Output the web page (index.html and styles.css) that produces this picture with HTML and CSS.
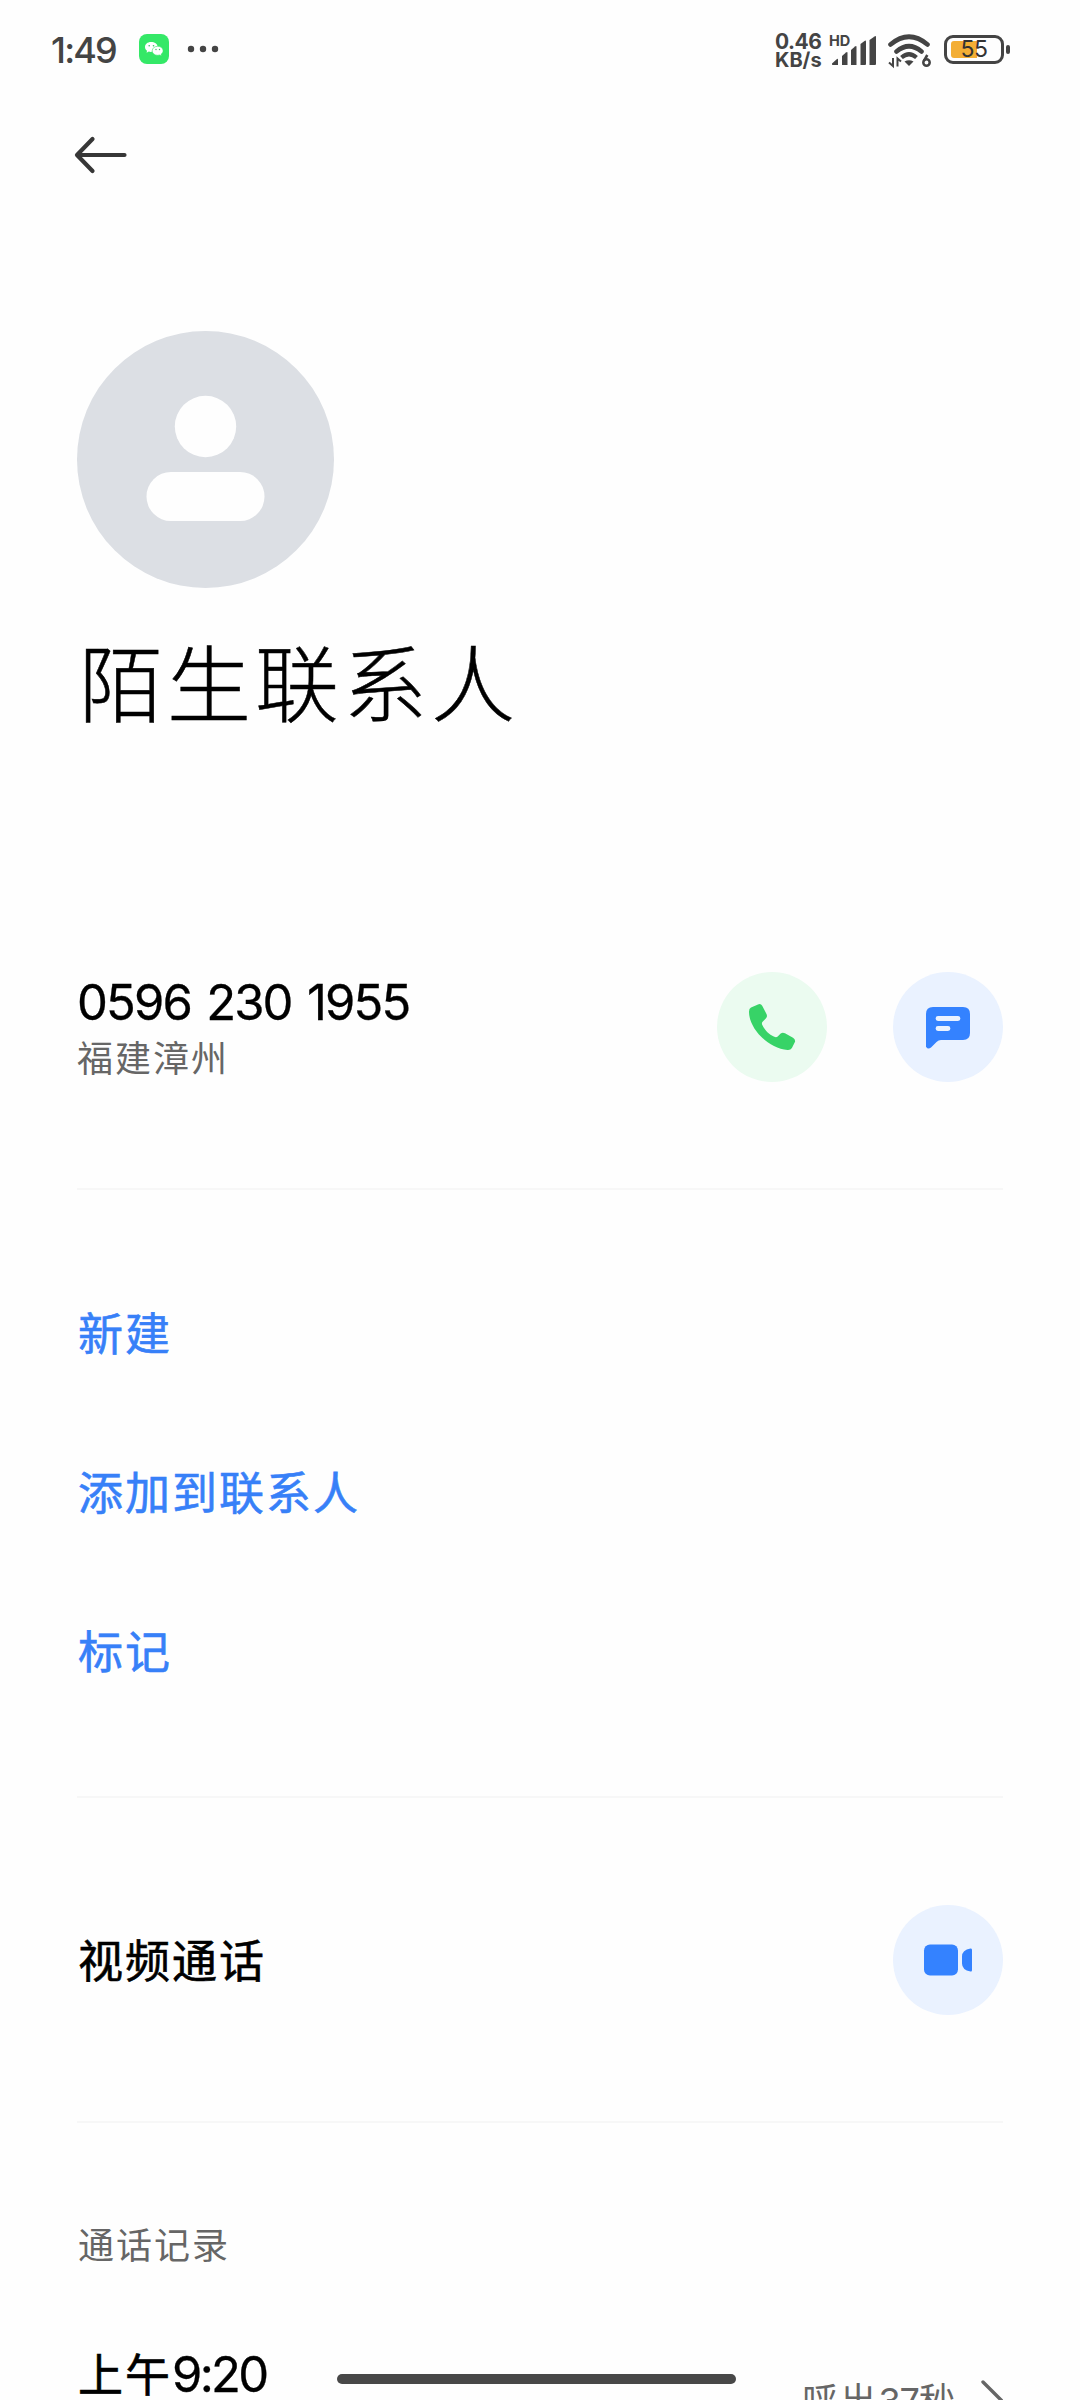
FILE: index.html
```html
<!DOCTYPE html>
<html lang="zh-CN">
<head>
<meta charset="utf-8">
<title>陌生联系人</title>
<link rel="stylesheet" href="styles.css">
</head>
<body>
<div class="screen">
  <header class="status">
    <span class="clock">1:49</span>
    <svg class="wechat" width="30" height="30" viewBox="0 0 30 30">
      <rect width="30" height="30" rx="8" fill="#34e867"/>
      <path d="M12 8c-3.6 0-6 2.2-6 5 0 1.600.8 2.900 2 3.800l-.4 1.900 2.200-1.100c1 .3 2 .4 3.200.2 4 0 5.600-2.600 5.600-5C18.600 10 15.600 8 12 8z" fill="#fff"/>
      <path d="M18.700 12.300c-3.200 0-5.500 2-5.500 4.500s2.300 4.500 5.500 4.500c.7 0 1.300-.1 1.900-.3l1.900 1-.4-1.700c1.200-.8 2-2 2-3.500 0-2.500-2.300-4.500-5.400-4.500z" fill="#fff" stroke="#34e867" stroke-width=".6"/>
      <g fill="#34c060"><circle cx="10.200" cy="11.700" r=".8"/><circle cx="14.500" cy="11.700" r=".8"/><circle cx="17" cy="15.500" r=".7"/><circle cx="20.500" cy="15.500" r=".7"/></g>
    </svg>
    <svg class="dots" width="32" height="8" viewBox="0 0 32 8" fill="#444"><circle cx="4" cy="4" r="3.200"/><circle cx="16" cy="4" r="3.200"/><circle cx="28" cy="4" r="3.200"/></svg>
    <div class="speed"><span>0.46</span><span class="unit">KB/s</span></div>
    <div class="signal">
      <span class="hd">HD</span>
      <svg width="46" height="30" viewBox="0 0 46 30" fill="#444">
        <path d="M1 27.500 6 23q1-.5 1 .5V29H2q-1.500 0-1-1.500z"/>
        <path d="M11 20l4-3.500q1.500-1 1.500.5V29H11z"/><path d="M20 14l4-3.500q1.500-1 1.500.5V29H20z"/>
        <path d="M29.500 8l4-3q1.500-1 1.500.5V28q0 1-1 1h-4.500z"/><path d="M38.500 4l5-3.500q1.500-1 1.500.5V28q0 1-1 1h-5.500z"/>
      </svg>
    </div>
    <svg class="wifi" width="46" height="36" viewBox="0 0 46 36" fill="none" stroke="#444">
      <path d="M3.500 11.500Q22 -4 40.500 11.500M9.500 18.500Q22 8 34.500 18.500" stroke-width="4.600" stroke-linecap="round"/>
      <path d="M14.500 24.500Q22 18 29.500 24.500" stroke-width="4.200"/>
      <path d="M17.500 28.500Q22 26 26.500 28.500L22 33z" fill="#444" stroke="none"/>
      <path d="M6 25v8L2 29.500M10.500 33.500V25.500l3.500 3" stroke-width="2"/>
      <circle cx="39.500" cy="29.500" r="3.200" stroke-width="2.500"/><path d="M36.900 27.800 40.300 22" stroke-width="2.600"/>
    </svg>
    <div class="battery"><div class="cell"><span class="level">55</span></div><i class="cap"></i></div>
  </header>

  <nav class="toolbar">
    <svg width="54" height="38" viewBox="0 0 54 38" fill="none" stroke="#373737" stroke-width="4.200" stroke-linecap="round" stroke-linejoin="round"><path d="M19.500 3 4 19 19.500 35M4.500 19H51.500"/></svg>
  </nav>

  <main>
    <section class="profile">
      <svg width="257" height="257" viewBox="0 0 257 257"><circle cx="128.500" cy="128.500" r="128.500" fill="#dcdfe4"/><circle cx="128.500" cy="95.500" r="30.700" fill="#fefefe"/><rect x="69.500" y="141" width="118" height="49" rx="24.500" fill="#fefefe"/></svg>
      <h1>陌生联系人</h1>
    </section>

    <section class="number">
      <div class="info"><div class="digits">0596 230 1955</div><div class="place">福建漳州</div></div>
      <a class="round green"><svg width="110" height="110" viewBox="0 0 110 110"><path d="M34 35.500 41 32.400q2.800-1 4.200 1.300L49.500 42q1.200 2.600-.7 4.600l-3.200 3.200q-1.200 1.300-.3 3.200c3.200 6 6.500 9.400 12 11.800q2 .8 3.400-.3l3-3q2-1.400 4.300-.2l8 4.500q2.800 1.700 1.900 4.300l-3 6q-1.300 2.100-4.300 1.900C51.500 76.500 32.200 57 32 40q-.1-3.300 2-4.500z" fill="#37d367"/></svg></a>
      <a class="round blue"><svg width="110" height="110" viewBox="0 0 110 110"><path d="M40 35h30q7 0 7 7v19q0 7-7 7H48q-2.500 0-4.500 2L38 75.500q-3 2.500-5-.8V42q0-7 7-7z" fill="#3482ff"/><path d="M45 46.500h20M45 56.500h10" stroke="#eaf2ff" stroke-width="4.800" stroke-linecap="round"/></svg></a>
    </section>

    <section class="actions"><a>新建</a><a>添加到联系人</a><a>标记</a></section>

    <section class="video">
      <span>视频通话</span>
      <a class="round blue"><svg width="110" height="110" viewBox="0 0 110 110" fill="#3482ff"><rect x="31" y="39.500" width="34" height="31" rx="6"/><path d="M77.500 43.500q1.500-.5 1.500 1.500v20q0 2-1.500 1.500-8.500-1.500-8.500-8v-7q0-6.500 8.500-8z"/></svg></a>
    </section>

    <section class="history">
      <h2>通话记录</h2>
      <div class="call">
        <span class="time">上午<span class="hour">9:20</span></span>
        <span class="result">呼出<span class="secs">37</span>秒</span>
        <svg class="chevron" width="22" height="40" viewBox="0 0 22 40" fill="none" stroke="#666" stroke-width="3.400" stroke-linecap="round"><path d="M2 2 20 20 2 38"/></svg>
      </div>
    </section>
  </main>
  <div class="home"></div>
</div>
</body>
</html>
```
FILE: styles.css
```css
* { box-sizing: border-box; }
body { margin: 0; background: #fefefe; color: #000; font-family: Inter, "Noto Sans CJK SC", sans-serif; }
svg { display: block; flex: none; }
h1, h2 { margin: 0; }
.screen { position: relative; width: 1080px; height: 2400px; overflow: hidden; }

.status { display: flex; align-items: center; height: 98px; padding-left: 51px; color: #444; }
.clock { width: 88px; font-size: 36px; font-weight: 500; letter-spacing: -1.8px; line-height: 40px; margin-top: 1px; }
.dots { margin-left: 18px; }
.speed { display: flex; flex-direction: column; width: 50px; margin-left: 556px; font-size: 21px; font-weight: 700; line-height: 19px; letter-spacing: -.5px; margin-top: 3px; white-space: nowrap; }
.unit { font-size: 20px; letter-spacing: 0; }
.signal { position: relative; margin-left: 6px; padding-top: 3px; }
.hd { position: absolute; left: -2px; top: 1px; font-size: 14.500px; line-height: 14px; font-weight: 700; }
.wifi { margin-left: 10px; margin-top: 4px; }
.battery { display: flex; align-items: center; gap: 2px; margin-left: 11px; }
.cell { width: 60px; height: 29px; padding: 3px 4px; border: 3px solid #444; border-radius: 9px; }
.level { display: block; height: 17px; border-radius: 3px; background: linear-gradient(90deg, #f3ae35 26px, transparent 26px); font-size: 23px; line-height: 17px; text-align: center; color: #333; letter-spacing: -.5px; }
.cap { width: 4px; height: 9px; border-radius: 2px; background: #444; }

.toolbar { display: flex; align-items: center; height: 114px; padding-left: 73px; }

main { padding: 0 77px; }
.profile { height: 648px; padding-top: 119px; }
h1 { margin: 36px 0 0 2px; font-size: 84px; font-weight: 200; line-height: 124px; letter-spacing: 4px; -webkit-text-stroke: .5px #000; }
.number { display: flex; align-items: center; height: 330px; padding-top: 5px; border-bottom: 2px solid #f7f7f7; }
.info { flex: 1; padding-top: 4px; }
.digits { font-size: 49px; line-height: 60px; letter-spacing: -1.900px; word-spacing: 3.500px; -webkit-text-stroke: .3px #000; }
.place { font-size: 36px; line-height: 52px; letter-spacing: 2px; color: #666; }
.round { width: 110px; height: 110px; border-radius: 50%; }
.green { background: #ebfbf0; margin-right: 66px; }
.blue { background: #eaf2ff; }
.actions { height: 608px; padding-top: 65px; border-bottom: 2px solid #f7f7f7; }
.actions a { display: block; height: 159px; padding-left: 1px; line-height: 159px; font-size: 45px; letter-spacing: 2px; color: #3780f8; -webkit-text-stroke: .6px #3780f8; }
.video { display: flex; align-items: center; justify-content: space-between; height: 325px; border-bottom: 2px solid #f7f7f7; font-size: 45px; letter-spacing: 2px; -webkit-text-stroke: .6px #000; }
.video span { margin: -2px 0 0 1px; }
h2 { margin: 95px 0 0 1px; font-size: 36px; font-weight: 400; line-height: 56px; letter-spacing: 2px; color: #666; }
.call { display: flex; align-items: flex-start; margin-top: 68px; height: 120px; }
.time { flex: 1; padding-left: 1px; font-size: 45px; line-height: 66px; letter-spacing: 2px; -webkit-text-stroke: .6px #000; }
.hour { font-size: 49px; letter-spacing: -2.700px; -webkit-text-stroke: .3px #000; }
.result { margin: 33px 24px 0 0; font-size: 36px; line-height: 52px; letter-spacing: 2px; color: #666; }
.secs { letter-spacing: -1px; }
.chevron { margin-top: 38px; }
.home { position: absolute; left: 337px; top: 2374px; width: 399px; height: 10px; border-radius: 5px; background: #484848; }
```
